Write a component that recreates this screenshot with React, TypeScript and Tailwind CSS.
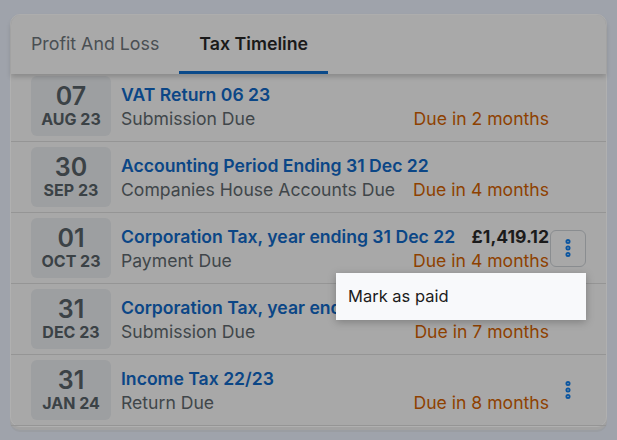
import { EllipsisVertical } from "lucide-react";

type Item = {
  day: string;
  month: string;
  title: string;
  subtitle: string;
  due: string;
  amount?: string;
  menu?: "open" | "plain";
};

const items: Item[] = [
  { day: "07", month: "AUG 23", title: "VAT Return 06 23", subtitle: "Submission Due", due: "Due in 2 months" },
  {
    day: "30",
    month: "SEP 23",
    title: "Accounting Period Ending 31 Dec 22",
    subtitle: "Companies House Accounts Due",
    due: "Due in 4 months",
  },
  {
    day: "01",
    month: "OCT 23",
    title: "Corporation Tax, year ending 31 Dec 22",
    subtitle: "Payment Due",
    due: "Due in 4 months",
    amount: "£1,419.12",
    menu: "open",
  },
  {
    day: "31",
    month: "DEC 23",
    title: "Corporation Tax, year ending 31 Dec 22",
    subtitle: "Submission Due",
    due: "Due in 7 months",
  },
  {
    day: "31",
    month: "JAN 24",
    title: "Income Tax 22/23",
    subtitle: "Return Due",
    due: "Due in 8 months",
    menu: "plain",
  },
];

function Row({ item }: { item: Item }) {
  return (
    <div className="relative flex h-[71px] items-center border-b border-[#959595] pl-5 pr-5">
      <div className="flex h-[60px] w-[80px] shrink-0 flex-col items-center justify-center rounded-md bg-[#9d9fa1] text-[#3b4246]">
        <span className="text-[25px] font-semibold leading-[26px]">{item.day}</span>
        <span className="text-[16px] font-bold leading-[20px]">{item.month}</span>
      </div>
      <div className="ml-[10px] flex min-w-0 flex-1 flex-col pt-[2px]">
        <div className="flex items-center justify-between gap-3">
          <span className="truncate text-[17.6px] font-semibold leading-6 text-[#0b4686]">{item.title}</span>
          {item.amount && (
            <span className="shrink-0 text-[17.6px] font-bold leading-6 text-[#1b1b1b]">{item.amount}</span>
          )}
        </div>
        <div className="flex items-center justify-between gap-3">
          <span className="truncate text-[17.6px] leading-6 text-[#40464a]">{item.subtitle}</span>
          <span className="shrink-0 text-[17.6px] leading-6 text-[#8e4100]">{item.due}</span>
        </div>
      </div>
      <div className="ml-px flex w-[36px] shrink-0 justify-center">
        {item.menu === "open" && (
          <button className="flex h-[37px] w-[37px] items-center justify-center rounded-md border border-[#8a8d90] text-[#0a55a0]">
            <EllipsisVertical size={22} strokeWidth={3.5} />
          </button>
        )}
        {item.menu === "plain" && (
          <span className="text-[#0a55a0]">
            <EllipsisVertical size={22} strokeWidth={3.5} />
          </span>
        )}
      </div>
      {item.menu === "open" && (
        <div className="absolute left-[325px] top-[60px] z-20 flex h-[47px] w-[250px] items-center bg-[#f8f9fb] px-3 text-[16.5px] text-[#1c1c1c] shadow-[0_2px_8px_rgba(0,0,0,0.25)]">
          Mark as paid
        </div>
      )}
    </div>
  );
}

export default function App() {
  return (
    <div
      className="h-[440px] w-[617px] overflow-hidden bg-[#9fa3ab] pl-[10px] pr-[10px] pt-[14px]"
      style={{ fontFamily: "Inter, 'Noto Sans', sans-serif" }}
    >
      <div className="flex h-[413px] flex-col rounded-[10px] border border-[#b0b0b0] bg-[#a8a8a8] shadow-[0_3px_0_#a2a2a2,0_5px_0_#9a9da2]">
        <div className="relative z-10 flex h-[59px] shrink-0 items-end rounded-t-[10px] bg-[#a9a9a9] shadow-[0_3px_5px_rgba(0,0,0,0.18)]">
          <div className="flex h-full items-center px-5 text-[17.8px] text-[#4a4f53]">Profit And Loss</div>
          <div className="flex h-full items-center border-b-[3px] border-[#0b4a8a] px-5 pt-[3px] text-[17.8px] font-semibold text-[#1a1a1a]">
            Tax Timeline
          </div>
        </div>
        <div className="-mt-[3px] flex-1">
          {items.map((item, i) => (
            <Row key={i} item={item} />
          ))}
        </div>
      </div>
    </div>
  );
}
